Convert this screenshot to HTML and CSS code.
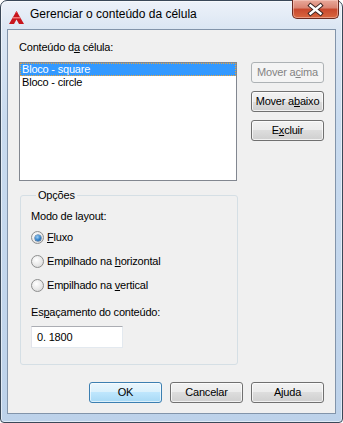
FILE: index.html
```html
<!DOCTYPE html>
<html lang="pt-BR">
<head>
    <meta charset="UTF-8">
    <title>Gerenciar o conteúdo da célula</title>
    <link rel="stylesheet" href="styles.css">
</head>
<body>
    <div class="window">
        <div class="titlebar">
            <svg class="app-icon" width="15" height="13" viewBox="0 0 15 13">
                <polygon points="7.5,0 15,13 10,13 7.5,8.5 5,13 0,13" fill="#c8161d"/>
                <polygon points="4.2,6 10.8,6 11.6,7.4 3.4,7.4" fill="#f07a7a"/>
                <polygon points="7.5,0 8.6,2 6.4,2" fill="#e8464a"/>
            </svg>
            <span class="title">Gerenciar o conteúdo da célula</span>
            <div class="close">
                <svg width="47" height="19" viewBox="0 0 47 19">
                    <path d="M18.5 5.5 L28.5 13.5 M28.5 5.5 L18.5 13.5" stroke="#3b2422" stroke-width="4.4" stroke-linecap="square"/>
                    <path d="M18.5 5.5 L28.5 13.5 M28.5 5.5 L18.5 13.5" stroke="#ffffff" stroke-width="2.4" stroke-linecap="square"/>
                </svg>
            </div>
        </div>
        <div class="client">
            <div class="top">
                <div class="label">Conteúdo d<u>a</u> célula:</div>
                <div class="listbox">
                    <div class="item selected">Bloco - square</div>
                    <div class="item">Bloco - circle</div>
                </div>
                <div class="side-buttons">
                    <div class="button disabled">Mover a<u>c</u>ima</div>
                    <div class="button">Mover a<u>b</u>aixo</div>
                    <div class="button">E<u>x</u>cluir</div>
                </div>
            </div>
            <fieldset class="group">
                <legend>Opções</legend>
                <div class="label">Modo de layout:</div>
                <div class="radios">
                    <div class="radio-row"><span class="radio checked"></span><span><u>F</u>luxo</span></div>
                    <div class="radio-row"><span class="radio"></span><span>Empilhado na <u>h</u>orizontal</span></div>
                    <div class="radio-row"><span class="radio"></span><span>Empilhado na <u>v</u>ertical</span></div>
                </div>
                <div class="label spacing-label">Es<u>p</u>açamento do conteúdo:</div>
                <div class="textbox">0. 1800</div>
            </fieldset>
            <div class="footer">
                <div class="button default">OK</div>
                <div class="button">Cancelar</div>
                <div class="button">Ajuda</div>
            </div>
        </div>
    </div>
</body>
</html>
```

FILE: styles.css
```css
body {
    margin: 0;
    font-family: "Liberation Sans", Arial, sans-serif;
    font-size: 11px;
    letter-spacing: -0.2px;
    color: #000;
}
.window {
    width: 343px;
    height: 423px;
    box-sizing: border-box;
    border: 1px solid #3a4858;
    border-radius: 7px 7px 4px 4px;
    background: linear-gradient(#edf2f9, #dbe6f3 28px, #c9dbef 120px, #bdd2ea);
    box-shadow: inset 0 0 0 1px rgba(255, 255, 255, 0.55);
    padding: 0 6px 8px;
    display: flex;
    flex-direction: column;
}
.titlebar {
    height: 28px;
    display: flex;
    align-items: flex-start;
    flex-shrink: 0;
}
.app-icon {
    margin: 10px 0 0 2px;
}
.title {
    margin: 6px 0 0 6px;
    font-size: 12px;
    line-height: 15px;
    letter-spacing: 0;
    color: #000;
}
.close {
    margin: -1px -3px 0 auto;
    width: 47px;
    height: 19px;
    box-sizing: border-box;
    border: 1px solid #6b2a20;
    border-top: none;
    border-radius: 0 0 5px 5px;
    background: linear-gradient(#e9a99b, #d98371 45%, #c8472d 50%, #d9673f);
    box-shadow: inset 0 0 0 1px rgba(255, 220, 210, 0.45);
}
.close svg {
    display: block;
    margin-left: -1px;
}
.client {
    flex: 1;
    border: 1px solid #8294aa;
    background: #f0f0f0;
    padding: 11px 11px 10px 11px;
    display: flex;
    flex-direction: column;
}
.label {
    line-height: 13px;
}
.top {
    display: grid;
    grid-template-columns: 218px 73px;
    column-gap: 14px;
    row-gap: 8px;
}
.top .label {
    grid-column: 1 / 3;
}
.listbox {
    height: 119px;
    box-sizing: border-box;
    border: 1px solid #828790;
    background: #fff;
}
.item {
    height: 13px;
    line-height: 13px;
    padding-left: 2px;
    box-sizing: border-box;
    white-space: nowrap;
}
.item.selected {
    background: #3399ff;
    color: #fff;
    border: 1px dotted #e9a43c;
    line-height: 11px;
    padding-left: 1px;
}
.side-buttons {
    display: flex;
    flex-direction: column;
    gap: 8px;
}
.button {
    width: 73px;
    height: 21px;
    box-sizing: border-box;
    border: 1px solid #707070;
    border-radius: 3px;
    background: linear-gradient(#f2f2f2, #ebebeb 50%, #dddddd 50%, #cfcfcf);
    box-shadow: inset 0 0 0 1px rgba(255, 255, 255, 0.7);
    text-align: center;
    line-height: 19px;
    white-space: nowrap;
}
.button.disabled {
    border-color: #adb2b5;
    background: #f4f4f4;
    color: #838383;
    box-shadow: none;
}
.button.default {
    border-color: #3c7fb1;
    background: linear-gradient(#eaf6fd, #d9f0fc 50%, #bee6fd 50%, #a7d9f5);
    box-shadow: inset 0 0 0 1px rgba(255, 255, 255, 0.6);
}
.group {
    margin: 8px 0 0 1px;
    width: 218px;
    box-sizing: border-box;
    border: 1px solid #d5dfe5;
    border-radius: 3px;
    padding: 8px 10px 16px 10px;
    min-width: 0;
}
.group legend {
    margin-left: 5px;
    padding: 0 2px;
    line-height: 13px;
}
.radios {
    margin-top: 8px;
    display: flex;
    flex-direction: column;
    gap: 11px;
}
.radio-row {
    height: 13px;
    line-height: 13px;
    display: flex;
    align-items: center;
    white-space: nowrap;
}
.radio {
    width: 13px;
    height: 13px;
    box-sizing: border-box;
    border: 1px solid #8e8f8f;
    border-radius: 50%;
    background: radial-gradient(circle at 40% 35%, #ffffff, #e6e6e6 60%, #cfcfcf);
    margin-right: 3px;
    position: relative;
}
.radio.checked::after {
    content: "";
    position: absolute;
    left: 2.5px;
    top: 2.5px;
    width: 6px;
    height: 6px;
    border-radius: 50%;
    background: radial-gradient(circle at 40% 35%, #9fd0f5, #2f7fc8 55%, #134a8a);
    box-shadow: 0 0 0 0.5px #1c4f86;
}
.spacing-label {
    margin-top: 14px;
}
.textbox {
    margin-top: 7px;
    width: 92px;
    height: 22px;
    box-sizing: border-box;
    border: 1px solid;
    border-color: #abadb3 #e3e9ef #e3e9ef #e2e3ea;
    background: #fff;
    padding-left: 5px;
    line-height: 20px;
}
.footer {
    margin-top: auto;
    display: flex;
    justify-content: flex-end;
    gap: 8px;
}
```
